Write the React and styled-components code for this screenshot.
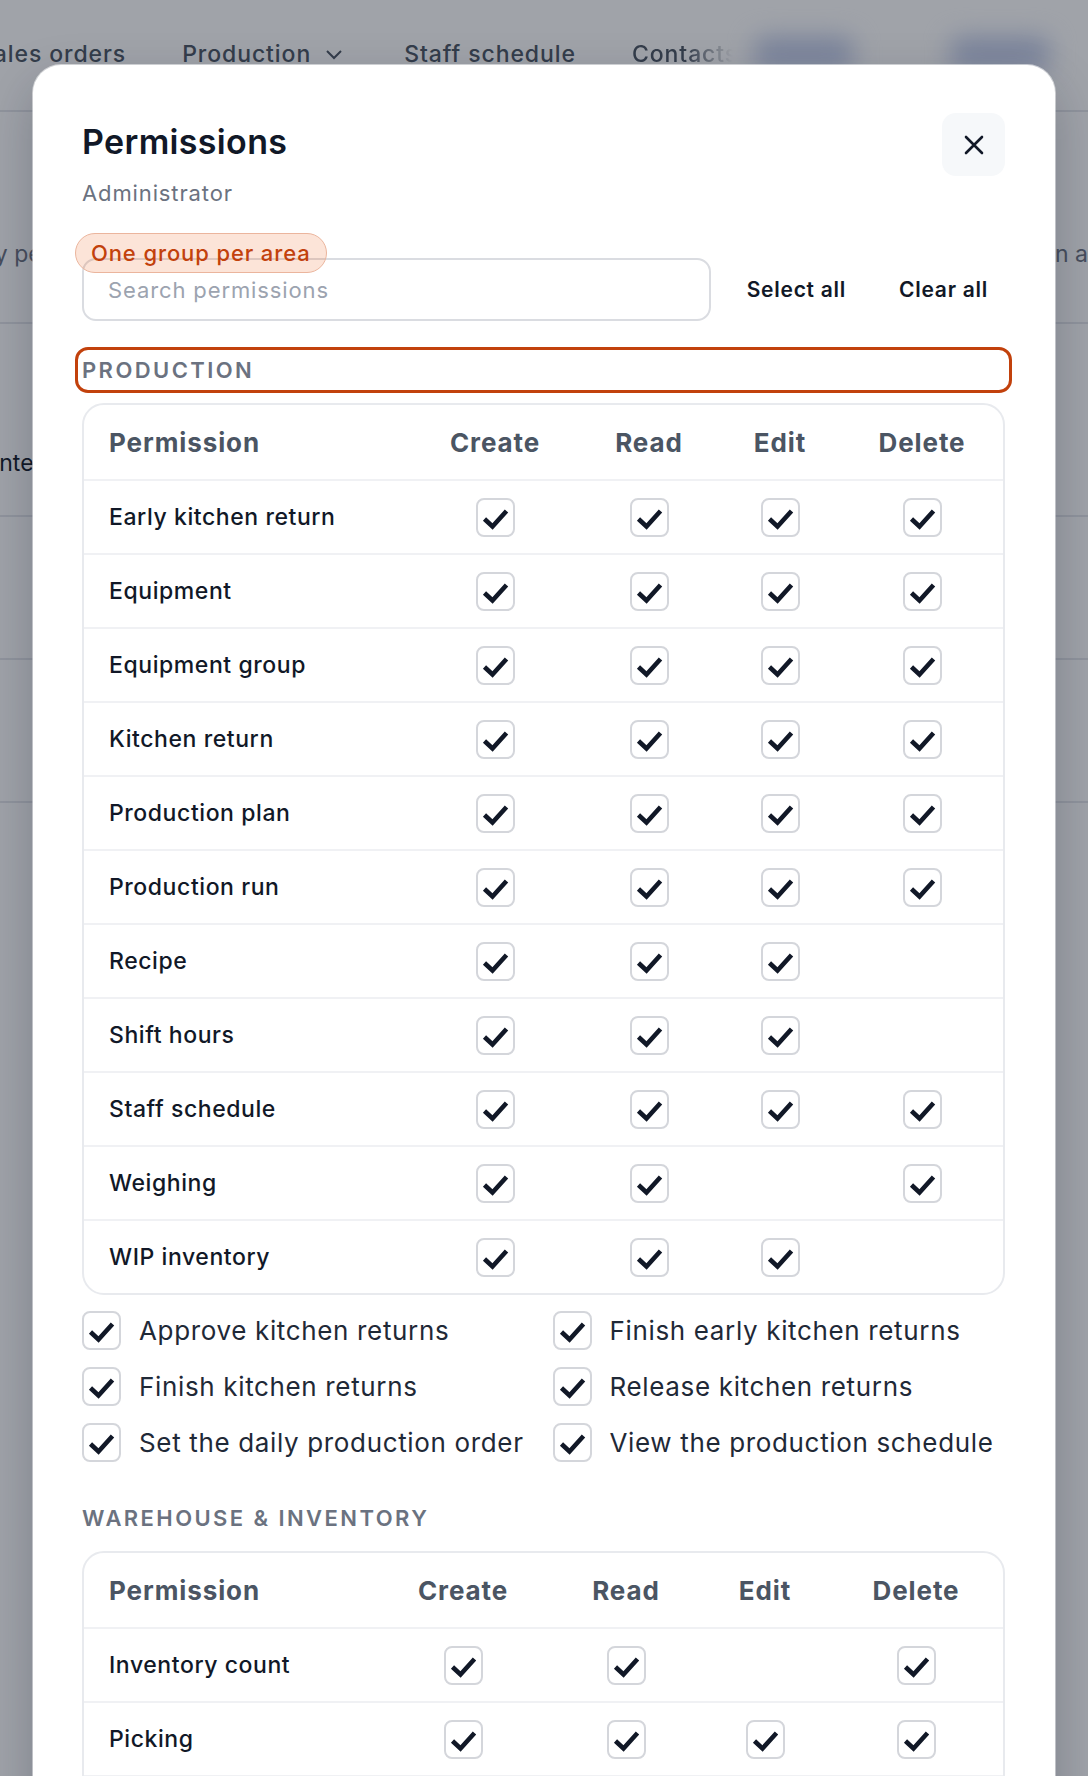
import styled, { createGlobalStyle } from "styled-components";

const GlobalStyle = createGlobalStyle`
  * { box-sizing: border-box; }
  body {
    margin: 0;
    overflow: hidden;
    font-family: Inter, "Noto Sans", sans-serif;
  }
`;

const Screen = styled.div`
  position: relative;
  height: 1776px;
  overflow: hidden;
  background: #fff;
`;

/* ---- page behind the dialog ---- */

const Nav = styled.nav`
  height: 112px;
  display: flex;
  align-items: center;
  gap: 56px;
  padding-bottom: 2px;
  margin-left: -22px;
  border-bottom: 2px solid #e5e7eb;
  font-size: 23px;
  font-weight: 500;
  letter-spacing: 0.04em;
  color: #4b5563;
`;

const NavItem = styled.span`
  display: flex;
  align-items: center;
  gap: 14px;
  white-space: nowrap;
  margin-right: ${(p) => p.$mr || 0}px;
  ${(p) => p.$fade && "-webkit-mask-image: linear-gradient(90deg, #000 50%, transparent 95%);"}
`;

const Blur = styled.span`
  width: ${(p) => p.$w}px;
  height: 36px;
  flex: none;
  border-radius: 12px;
  background: #c3cdea;
  filter: blur(12px);
  margin-left: ${(p) => p.$ml || 0}px;
`;

const Intro = styled.p`
  margin: 128px 0 0 -42px;
  display: flex;
  justify-content: space-between;
  font-size: 23px;
  color: #6b7280;
  white-space: nowrap;
  overflow: hidden;
`;

const BgRow = styled.div`
  height: ${(p) => p.$h}px;
  border-top: 2px solid #e5e7eb;
  display: flex;
  align-items: flex-end;
  padding-bottom: 38px;
  margin-left: -30px;
  font-size: 23px;
  color: #111827;
`;

const BgRows = styled.div`
  margin-top: 54px;
`;

/* ---- dialog ---- */

const Overlay = styled.div`
  position: absolute;
  inset: 0;
  background: rgba(17, 24, 39, 0.4);
  padding: 65px 33px 0;
`;

const Modal = styled.div`
  background: #fff;
  border-radius: 28px;
  padding: 48px 50px 40px 49px;
  box-shadow: 0 20px 50px rgba(15, 23, 42, 0.25), 0 0 0 1px rgba(255, 255, 255, 0.6);
`;

const Header = styled.div`
  display: flex;
  justify-content: space-between;
  align-items: flex-start;
`;

const TitleBlock = styled.div`
  padding-top: 9px;
`;

const Title = styled.h2`
  margin: 0;
  font-size: 34px;
  line-height: 40px;
  font-weight: 600;
  color: #111827;
  letter-spacing: 0.01em;
`;

const Subtitle = styled.p`
  margin: 17px 0 0;
  font-size: 22px;
  line-height: 28px;
  letter-spacing: 0.04em;
  color: #6b7280;
`;

const CloseButton = styled.button`
  width: 63px;
  height: 63px;
  border: 0;
  border-radius: 14px;
  background: #f6f8fa;
  display: flex;
  align-items: center;
  justify-content: center;
  color: #111827;
  padding: 0;
`;

const SearchRow = styled.div`
  position: relative;
  margin-top: 51px;
  display: flex;
  align-items: center;
  gap: 19px;
`;

const SearchInput = styled.input`
  flex: 1;
  height: 63px;
  border: 2px solid #dadce1;
  border-radius: 14px;
  padding: 0 24px;
  font-family: inherit;
  font-size: 22px;
  letter-spacing: 0.04em;
  color: #111827;
  background: transparent;
  &::placeholder { color: #9ca3af; }
`;

const TextButton = styled.button`
  height: 63px;
  border: 0;
  background: none;
  padding: 0 17px;
  font-family: inherit;
  font-size: 21px;
  font-weight: 600;
  letter-spacing: 0.035em;
  color: #111827;
`;

const Badge = styled.span`
  position: absolute;
  left: -7px;
  top: -25px;
  height: 40px;
  display: flex;
  align-items: center;
  padding: 0 15px;
  border-radius: 999px;
  border: 1.5px solid #ebb59d;
  background: rgba(234, 88, 12, 0.16);
  color: #c2410c;
  font-size: 22px;
  font-weight: 500;
  letter-spacing: 0.04em;
`;

const SectionHeading = styled.h3`
  margin: ${(p) => p.$top}px 0 17px;
  height: 32px;
  line-height: 32px;
  font-size: 22px;
  font-weight: 600;
  letter-spacing: 0.11em;
  text-transform: uppercase;
  color: #6b7280;
  border-radius: 6px;
  ${(p) => p.$highlight && "outline: 3px solid #c2410c; outline-offset: 4px;"}
`;

const Table = styled.div`
  border: 2px solid #e8eaee;
  border-radius: 22px;
  overflow: hidden;
`;

const Row = styled.div`
  display: grid;
  grid-template-columns: ${(p) => p.$cols};
  align-items: center;
  height: 74px;
  border-top: ${(p) => (p.$head ? "0" : "2px solid #f0f1f4")};
`;

const HeadCell = styled.div`
  font-size: 26px;
  font-weight: 650;
  letter-spacing: 0.035em;
  color: #4b5563;
  text-align: center;
  white-space: nowrap;
  &:first-child {
    text-align: left;
    padding-left: 25px;
  }
`;

const LabelCell = styled.div`
  padding-left: 25px;
  font-size: 23px;
  font-weight: 500;
  letter-spacing: 0.025em;
  color: #111827;
  white-space: nowrap;
`;

const Cell = styled.div`
  display: flex;
  justify-content: center;
`;

const Box = styled.span`
  width: 39px;
  height: 39px;
  flex: none;
  border: 2px solid #d4d6db;
  border-radius: 8px;
  background: #fff;
  display: flex;
  align-items: center;
  justify-content: center;
`;

const ActionList = styled.div`
  margin-top: 16px;
  display: grid;
  grid-template-columns: 1fr 1fr;
  column-gap: 18px;
  row-gap: 17px;
`;

const ActionItem = styled.label`
  display: flex;
  align-items: center;
  gap: 18px;
  font-size: 26px;
  letter-spacing: 0.025em;
  color: #1f2937;
  white-space: nowrap;
`;

function Check() {
  return (
    <Box>
      <svg width="35" height="35" viewBox="0 0 35 35" fill="none">
        <path d="M6.5 19 L14.5 26.5 L28.5 11" stroke="#111827" strokeWidth="4.6" />
      </svg>
    </Box>
  );
}

function XIcon() {
  return (
    <svg width="24" height="24" viewBox="0 0 24 24" fill="none" stroke="currentColor" strokeWidth="2.6" strokeLinecap="round">
      <path d="M4 4 L20 20 M20 4 L4 20" />
    </svg>
  );
}

function Chevron() {
  return (
    <svg width="18" height="18" viewBox="0 0 18 18" fill="none" stroke="currentColor" strokeWidth="2">
      <path d="M2 6 L9 13 L16 6" />
    </svg>
  );
}

const production = [
  ["Early kitchen return", [1, 1, 1, 1]],
  ["Equipment", [1, 1, 1, 1]],
  ["Equipment group", [1, 1, 1, 1]],
  ["Kitchen return", [1, 1, 1, 1]],
  ["Production plan", [1, 1, 1, 1]],
  ["Production run", [1, 1, 1, 1]],
  ["Recipe", [1, 1, 1, 0]],
  ["Shift hours", [1, 1, 1, 0]],
  ["Staff schedule", [1, 1, 1, 1]],
  ["Weighing", [1, 1, 0, 1]],
  ["WIP inventory", [1, 1, 1, 0]],
];

const warehouse = [
  ["Inventory count", [1, 1, 0, 1]],
  ["Picking", [1, 1, 1, 1]],
  ["Stock transfer", [1, 1, 1, 1]],
];

const actions = [
  "Approve kitchen returns",
  "Finish early kitchen returns",
  "Finish kitchen returns",
  "Release kitchen returns",
  "Set the daily production order",
  "View the production schedule",
];

const heads = ["Permission", "Create", "Read", "Edit", "Delete"];

function PermissionTable({ rows, cols }) {
  return (
    <Table>
      <Row $head $cols={cols}>
        {heads.map((h) => (
          <HeadCell key={h}>{h}</HeadCell>
        ))}
      </Row>
      {rows.map(([name, flags]) => (
        <Row key={name} $cols={cols}>
          <LabelCell>{name}</LabelCell>
          {flags.map((on, i) => (
            <Cell key={i}>{on ? <Check /> : null}</Cell>
          ))}
        </Row>
      ))}
    </Table>
  );
}

export default function App() {
  return (
    <Screen>
      <GlobalStyle />
      <Nav>
        <NavItem>Sales orders</NavItem>
        <NavItem $mr={5}>
          Production
          <Chevron />
        </NavItem>
        <NavItem>Staff schedule</NavItem>
        <NavItem $fade>Contacts</NavItem>
        <Blur $w={100} $ml={-40} />
        <Blur $w={100} $ml={40} />
        <NavItem>
          <Chevron />
        </NavItem>
      </Nav>
      <Intro>
        <span>Only permissions</span>
        <span>in a</span>
      </Intro>
      <BgRows>
        <BgRow $h={193}>Printed</BgRow>
        <BgRow $h={143} />
        <BgRow $h={143} />
        <BgRow $h={20} />
      </BgRows>

      <Overlay>
        <Modal>
          <Header>
            <TitleBlock>
              <Title>Permissions</Title>
              <Subtitle>Administrator</Subtitle>
            </TitleBlock>
            <CloseButton aria-label="Close">
              <XIcon />
            </CloseButton>
          </Header>

          <SearchRow>
            <SearchInput placeholder="Search permissions" />
            <TextButton>Select all</TextButton>
            <TextButton>Clear all</TextButton>
            <Badge>One group per area</Badge>
          </SearchRow>

          <SectionHeading $top={33} $highlight>
            Production
          </SectionHeading>
          <PermissionTable rows={production} cols="1fr 168px 140px 122px 162px" />

          <ActionList>
            {actions.map((a) => (
              <ActionItem key={a}>
                <Check />
                {a}
              </ActionItem>
            ))}
          </ActionList>

          <SectionHeading $top={40}>Warehouse &amp; Inventory</SectionHeading>
          <PermissionTable rows={warehouse} cols="1fr 176px 150px 128px 174px" />
        </Modal>
      </Overlay>
    </Screen>
  );
}
